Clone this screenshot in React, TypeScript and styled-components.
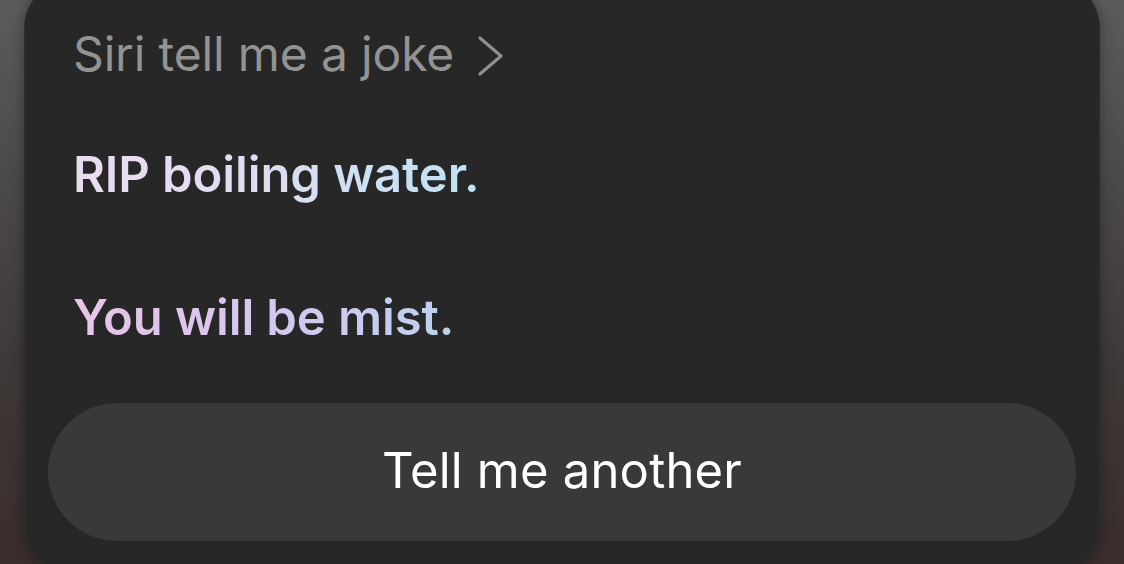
import React from "react";
import styled, { createGlobalStyle } from "styled-components";

const Global = createGlobalStyle`
  html, body {
    margin: 0;
    padding: 0;
    width: 1124px;
    height: 564px;
    overflow: hidden;
    background: linear-gradient(180deg, #5c5b5b 0%, #4a4747 35%, #3e3938 65%, #3a2d2b 100%);
    font-family: Inter, "Noto Sans", "Liberation Sans", sans-serif;
  }
  #root { height: 564px; }
`;

const Stage = styled.div`
  width: 1124px;
  height: 564px;
  overflow: hidden;
  display: flex;
  align-items: flex-start;
  padding-left: 24px;
  box-sizing: border-box;
`;

const Card = styled.section`
  width: 1076px;
  height: 594px;
  margin-top: -20px;
  background: #272727;
  border-radius: 48px;
  box-shadow: 0 0 14px rgba(0, 0, 0, 0.35), inset 0 0 0 1px rgba(255, 255, 255, 0.04);
  box-sizing: border-box;
  padding: 45px 24px 33px;
  display: flex;
  flex-direction: column;
`;

const Content = styled.div`
  padding: 0 25px;
  display: flex;
  flex-direction: column;
  flex: 1;
`;

const Query = styled.div`
  display: flex;
  align-items: center;
  gap: 24px;
  height: 58px;
  font-size: 48px;
  line-height: 58px;
  color: #939393;
  font-weight: 400;
  letter-spacing: -0.15px;
`;

const Chevron = styled.svg`
  width: 25px;
  height: 40px;
  flex: none;
  margin-top: 4px;
`;

const JokeLine = styled.div<{ $gradient: string; $top: number }>`
  margin-top: ${(p) => p.$top}px;
  align-self: flex-start;
  font-size: 49px;
  line-height: 58px;
  font-weight: 600;
  letter-spacing: -0.1px;
  background: ${(p) => p.$gradient};
  -webkit-background-clip: text;
  background-clip: text;
  color: transparent;
`;

const ActionButton = styled.button`
  margin-top: auto;
  height: 138px;
  width: 100%;
  border: none;
  border-radius: 69px;
  background: #39393b;
  color: #ffffff;
  font-family: Inter, "Noto Sans", "Liberation Sans", sans-serif;
  font-size: 49px;
  font-weight: 400;
  letter-spacing: 0.2px;
  display: flex;
  align-items: center;
  justify-content: center;
  padding: 0 0 3px;
  cursor: pointer;
`;

export default function App() {
  return (
    <>
      <Global />
      <Stage>
        <Card>
          <Content>
            <Query>
              <span>Siri tell me a joke</span>
              <Chevron viewBox="0 0 25 40">
                <polyline
                  points="2,2 23,20 2,38"
                  fill="none"
                  stroke="#8f8f8f"
                  strokeWidth="3.2"
                  strokeLinecap="round"
                  strokeLinejoin="round"
                />
              </Chevron>
            </Query>
            <JokeLine
              $top={63}
              $gradient="linear-gradient(90deg, #ecdcef 0%, #e2dcf1 40%, #cfe0f4 70%, #bde4f7 100%)"
            >
              RIP boiling water.
            </JokeLine>
            <JokeLine
              $top={85}
              $gradient="linear-gradient(90deg, #e8c5e5 0%, #dac6ee 40%, #cccbf0 70%, #bcd2ef 100%)"
            >
              You will be mist.
            </JokeLine>
          </Content>
          <ActionButton>Tell me another</ActionButton>
        </Card>
      </Stage>
    </>
  );
}
